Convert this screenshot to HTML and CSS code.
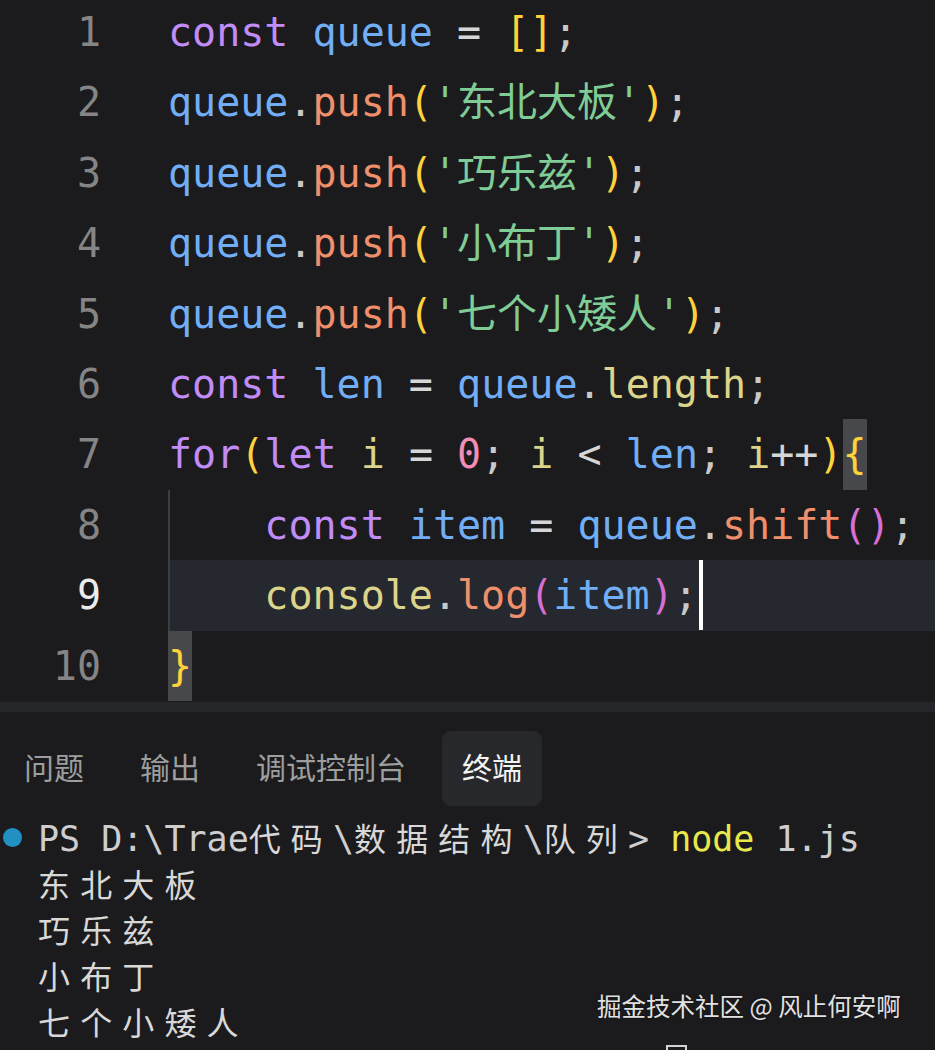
FILE: index.html
```html
<!DOCTYPE html>
<html lang="zh-CN">
<head>
<meta charset="utf-8">
<title>queue.js</title>
<link rel="stylesheet" href="styles.css">
</head>
<body>
<div class="screen">
  <div class="editor">
    <div class="line"><span class="ln">1</span><span class="code"><span class="kw">const</span> <span class="var">queue</span> <span class="op">=</span> <span class="p1">[]</span><span class="pn">;</span></span></div>
    <div class="line"><span class="ln">2</span><span class="code"><span class="var">queue</span><span class="pn">.</span><span class="fn">push</span><span class="p1">(</span><span class="str">'东北大板'</span><span class="p1">)</span><span class="pn">;</span></span></div>
    <div class="line"><span class="ln">3</span><span class="code"><span class="var">queue</span><span class="pn">.</span><span class="fn">push</span><span class="p1">(</span><span class="str">'巧乐兹'</span><span class="p1">)</span><span class="pn">;</span></span></div>
    <div class="line"><span class="ln">4</span><span class="code"><span class="var">queue</span><span class="pn">.</span><span class="fn">push</span><span class="p1">(</span><span class="str">'小布丁'</span><span class="p1">)</span><span class="pn">;</span></span></div>
    <div class="line"><span class="ln">5</span><span class="code"><span class="var">queue</span><span class="pn">.</span><span class="fn">push</span><span class="p1">(</span><span class="str">'七个小矮人'</span><span class="p1">)</span><span class="pn">;</span></span></div>
    <div class="line"><span class="ln">6</span><span class="code"><span class="kw">const</span> <span class="var">len</span> <span class="op">=</span> <span class="var">queue</span><span class="pn">.</span><span class="yel">length</span><span class="pn">;</span></span></div>
    <div class="line"><span class="ln">7</span><span class="code"><span class="kw">for</span><span class="p1">(</span><span class="kw">let</span> <span class="yel">i</span> <span class="op">=</span> <span class="num">0</span><span class="pn">;</span> <span class="yel">i</span> <span class="op">&lt;</span> <span class="var">len</span><span class="pn">;</span> <span class="yel">i</span><span class="op">++</span><span class="p1">)</span><span class="p1 match">{</span></span></div>
    <div class="line"><span class="ln">8</span><span class="code guide">    <span class="kw">const</span> <span class="var">item</span> <span class="op">=</span> <span class="var">queue</span><span class="pn">.</span><span class="fn">shift</span><span class="p2">()</span><span class="pn">;</span></span></div>
    <div class="line current"><span class="ln">9</span><span class="code guide">    <span class="yel">console</span><span class="pn">.</span><span class="fn">log</span><span class="p2">(</span><span class="var">item</span><span class="p2">)</span><span class="pn">;</span><span class="caret"></span></span></div>
    <div class="line"><span class="ln">10</span><span class="code"><span class="p1 match">}</span></span></div>
  </div>
  <div class="sep"></div>
  <div class="panel">
    <div class="tabs">
      <span class="tab">问题</span>
      <span class="tab">输出</span>
      <span class="tab">调试控制台</span>
      <span class="tab active">终端</span>
    </div>
    <div class="term">
      <div class="tline"><span class="deco"><span class="dot"></span></span><span class="ttext">PS D:\Trae<span class="wide">代码</span>\<span class="wide">数据结构</span>\<span class="wide">队列</span>&gt; <span class="cmd">node</span> 1.js</span></div>
      <div class="tline"><span class="deco"></span><span class="ttext"><span class="wide">东北大板</span></span></div>
      <div class="tline"><span class="deco"></span><span class="ttext"><span class="wide">巧乐兹</span></span></div>
      <div class="tline"><span class="deco"></span><span class="ttext"><span class="wide">小布丁</span></span></div>
      <div class="tline"><span class="deco"></span><span class="ttext"><span class="wide">七个小矮人</span></span></div>
      <div class="tline"><span class="deco"></span><span class="ttext">                              <span class="tcursor"></span></span></div>
    </div>
    <div class="watermark">掘金技术社区 @ 风止何安啊</div>
  </div>
</div>
</body>
</html>
```
FILE: styles.css
```css
html, body {
  margin: 0;
  padding: 0;
  background: #1b1b1d;
  height: 1050px;
  overflow: hidden;
}

.screen {
  width: 935px;
  height: 1050px;
  overflow: hidden;
  background: #1b1b1d;
}

.editor {
  margin-top: -3px;
  height: 705px;
  font-family: "DejaVu Sans Mono", "Noto Sans CJK SC", monospace;
  font-size: 40px;
  line-height: 70.4px;
  color: #d4d4d4;
}

.line {
  display: flex;
  height: 70.4px;
}

.ln {
  width: 101px;
  flex: none;
  text-align: right;
  color: #858585;
  margin-right: 67px;
}

.current .ln {
  color: #ececec;
}

.code {
  flex: 1;
  white-space: pre;
}

.current .code {
  background: #25282e;
}

.guide {
  box-shadow: inset 2px 0 0 #3d3e40;
}

.kw { color: #c28cf6; }
.var { color: #72aef5; }
.fn { color: #ef8f6b; }
.str { color: #80cc97; }
.p1 { color: #ffd23c; }
.p2 { color: #d86fd4; }
.op { color: #d6d6d6; }
.pn { color: #c9c9c9; }
.yel { color: #dcd48a; }
.num { color: #f28db6; }

.match {
  display: inline-block;
  background: #47484b;
  height: 70.4px;
  vertical-align: top;
}

.caret {
  display: inline-block;
  width: 4px;
  height: 70px;
  margin-left: 1px;
  background: #ffffff;
  vertical-align: top;
}

.sep {
  height: 10px;
  background: #252629;
}

.panel {
  position: relative;
  height: 338px;
  padding-top: 19px;
  box-sizing: border-box;
}

.tabs {
  display: flex;
  gap: 16px;
  margin-left: 4px;
  height: 75px;
  font-family: "Noto Sans CJK SC", "Noto Sans", sans-serif;
  font-size: 30px;
}

.tab {
  display: flex;
  align-items: center;
  padding: 0 20px 5px;
  color: #9e9e9e;
  border-radius: 9px;
}

.tab.active {
  background: #27282b;
  color: #f4f4f4;
}

.term {
  margin-top: 8px;
  font-family: "DejaVu Sans Mono", "Noto Sans CJK SC", monospace;
  font-size: 35px;
  line-height: 46px;
  color: #cecece;
}

.tline {
  display: flex;
  height: 46px;
}

.deco {
  width: 38px;
  flex: none;
  display: flex;
  align-items: center;
}

.dot {
  width: 19px;
  height: 19px;
  margin-left: 3px;
  border-radius: 50%;
  background: #2390c3;
}

.ttext {
  white-space: pre;
}

.wide {
  font-family: "Noto Sans CJK SC", sans-serif;
  font-size: 32px;
  letter-spacing: 10.14px;
  color: #d8d8d8;
}

.cmd {
  color: #e8e84c;
}

.tcursor {
  display: inline-block;
  width: 17px;
  height: 40px;
  margin-left: -4px;
  margin-top: 1px;
  border: 2px solid #d2d2d2;
  vertical-align: top;
}

.watermark {
  position: absolute;
  left: 597px;
  top: 279px;
  font-family: "Noto Sans CJK SC", "Noto Sans", sans-serif;
  font-size: 24.5px;
  line-height: 30px;
  color: #e2e2e2;
  text-shadow: 0 0 2px rgba(0, 0, 0, 0.6);
  white-space: nowrap;
}
```
